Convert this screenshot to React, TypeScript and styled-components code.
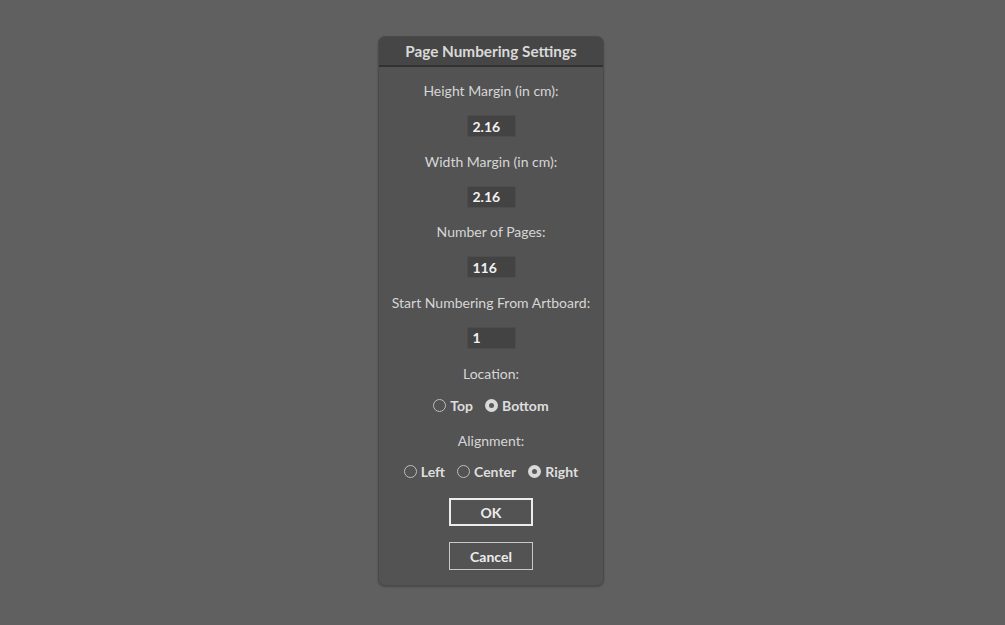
import React, { useState } from "react";
import styled, { createGlobalStyle } from "styled-components";

const Global = createGlobalStyle`
  html, body { margin: 0; padding: 0; background: #606060; }
  body { font-family: "Lato", "Open Sans", sans-serif; }
`;

const Page = styled.div`
  width: 1005px;
  height: 625px;
  background: #606060;
  display: flex;
  justify-content: flex-start;
  align-items: flex-start;
  padding: 36px 0 0 378px;
  box-sizing: border-box;
`;

const Dialog = styled.div`
  width: 224px;
  background: #535353;
  border: 1px solid #4a4a4a;
  border-radius: 7px;
  box-shadow: 0 1px 2px rgba(0, 0, 0, 0.25);
  overflow: hidden;
  display: flex;
  flex-direction: column;
  align-items: center;
  padding-bottom: 15px;
`;

const TitleBar = styled.div`
  align-self: stretch;
  height: 28px;
  background: #464646;
  border-bottom: 2px solid #323232;
  display: flex;
  align-items: center;
  justify-content: center;
  color: #d9d9d9;
  font-weight: 700;
  font-size: 15.3px;
  margin-bottom: 16px;
`;

const Label = styled.div<{ $top?: number }>`
  color: #d6d6d6;
  font-size: 14px;
  line-height: 16px;
  margin-top: ${(p) => p.$top ?? 0}px;
`;

const Field = styled.input`
  width: 49px;
  height: 22px;
  box-sizing: border-box;
  margin-top: 16px;
  margin-bottom: 16.5px;
  background: #434343;
  border: 1px solid #4d4d4d;
  color: #f2f2f2;
  font-family: inherit;
  font-size: 14px;
  font-weight: 700;
  padding: 0 5px;
  outline: none;
`;

const RadioRow = styled.div<{ $top: number }>`
  display: flex;
  align-items: center;
  gap: 12px;
  height: 16px;
  margin-top: ${(p) => p.$top}px;
`;

const RadioItem = styled.label`
  display: flex;
  align-items: center;
  gap: 4px;
  color: #dedede;
  font-size: 14px;
  font-weight: 700;
  cursor: pointer;
`;

const Circle = styled.span<{ $on: boolean }>`
  width: 13px;
  height: 13px;
  box-sizing: border-box;
  border-radius: 50%;
  border: ${(p) => (p.$on ? "none" : "1px solid #bdbdbd")};
  background: ${(p) => (p.$on ? "#d9d9d9" : "transparent")};
  display: flex;
  align-items: center;
  justify-content: center;
  &::after {
    content: "";
    width: 5px;
    height: 5px;
    border-radius: 50%;
    background: #5a5a5a;
    display: ${(p) => (p.$on ? "block" : "none")};
  }
`;

const Button = styled.button<{ $primary?: boolean; $top: number }>`
  width: 84px;
  height: 28px;
  margin-top: ${(p) => p.$top}px;
  background: transparent;
  border: ${(p) => (p.$primary ? "2px solid #ececec" : "1px solid #c8c8c8")};
  color: #ececec;
  font-family: inherit;
  font-size: 14px;
  font-weight: 700;
  cursor: pointer;
`;

function Radio({ label, on, onClick }: { label: string; on: boolean; onClick: () => void }) {
  return (
    <RadioItem onClick={onClick}>
      <Circle $on={on} />
      {label}
    </RadioItem>
  );
}

export default function App() {
  const [loc, setLoc] = useState("Bottom");
  const [align, setAlign] = useState("Right");
  return (
    <>
      <Global />
      <Page>
        <Dialog>
          <TitleBar>Page Numbering Settings</TitleBar>
          <Label>Height Margin (in cm):</Label>
          <Field defaultValue="2.16" />
          <Label>Width Margin (in cm):</Label>
          <Field defaultValue="2.16" />
          <Label>Number of Pages:</Label>
          <Field defaultValue="116" />
          <Label>Start Numbering From Artboard:</Label>
          <Field defaultValue="1" />
          <Label $top={1}>Location:</Label>
          <RadioRow $top={15}>
            {["Top", "Bottom"].map((l) => (
              <Radio key={l} label={l} on={loc === l} onClick={() => setLoc(l)} />
            ))}
          </RadioRow>
          <Label $top={20}>Alignment:</Label>
          <RadioRow $top={14}>
            {["Left", "Center", "Right"].map((l) => (
              <Radio key={l} label={l} on={align === l} onClick={() => setAlign(l)} />
            ))}
          </RadioRow>
          <Button $primary $top={19}>OK</Button>
          <Button $top={16}>Cancel</Button>
        </Dialog>
      </Page>
    </>
  );
}
